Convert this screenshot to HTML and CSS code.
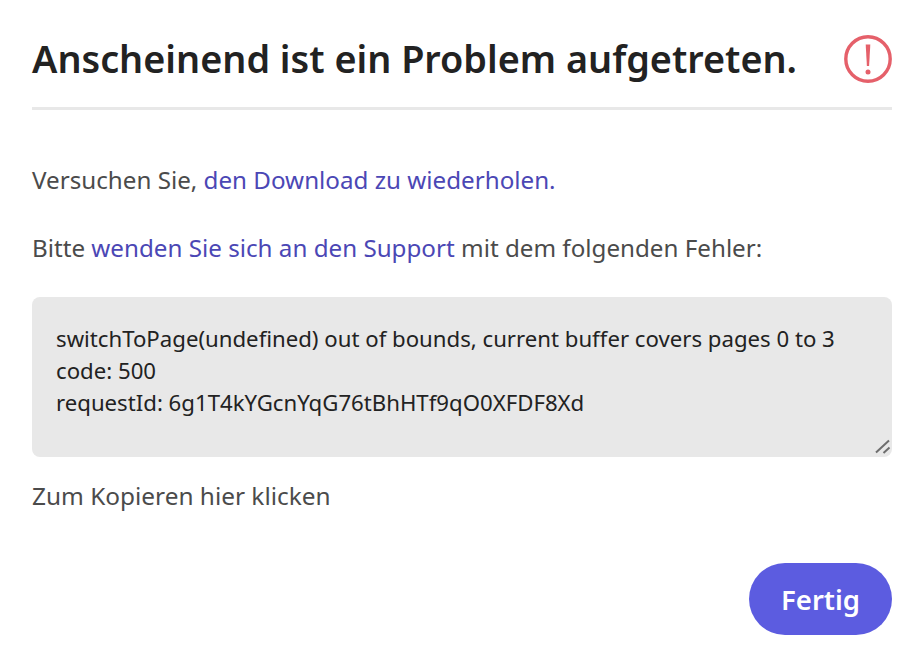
FILE: index.html
```html
<!DOCTYPE html>
<html lang="de">
<head>
  <meta charset="UTF-8">
  <meta name="viewport" content="width=device-width, initial-scale=1.0">
  <title>Fehler</title>
  <link rel="stylesheet" href="styles.css">
</head>
<body>
  <div class="dialog">
    <div class="header">
      <h1>Anscheinend ist ein Problem aufgetreten.</h1>
      <svg class="alert-icon" width="48" height="48" viewBox="0 0 48 48" aria-hidden="true">
        <circle cx="24" cy="24" r="22.2" fill="none" stroke="#e5606a" stroke-width="3.4"/>
        <path d="M21.700 9.500h4.600l-1.200 21.500h-2.200z" fill="#e5606a"/>
        <circle cx="24" cy="37" r="2.500" fill="#e5606a"/>
      </svg>
    </div>

    <p class="retry">Versuchen Sie, <a href="#">den Download zu wiederholen.</a></p>
    <p class="support">Bitte <a href="#">wenden Sie sich an den Support</a> mit dem folgenden Fehler:</p>

    <div class="error-box">
      <div>switchToPage(undefined) out of bounds, current buffer covers pages 0 to 3</div>
      <div>code: 500</div>
      <div>requestId: 6g1T4kYGcnYqG76tBhHTf9qO0XFDF8Xd</div>
      <svg class="grip" width="16" height="16" viewBox="0 0 16 16" aria-hidden="true">
        <path d="M1 13.500L14 1.500M8.500 14L14.500 8.500" stroke="#6e6e6e" stroke-width="2" fill="none"/>
      </svg>
    </div>

    <p class="copy-hint">Zum Kopieren hier klicken</p>

    <div class="actions">
      <button class="done">Fertig</button>
    </div>
  </div>
</body>
</html>
```

FILE: styles.css
```css
body {
  margin: 0;
  background: #fff;
  font-family: "Noto Sans", "Open Sans", sans-serif;
  color: #4b4b4b;
}
.dialog {
  padding: 35px 30px 0 32px;
}
.header {
  display: flex;
  align-items: center;
  justify-content: space-between;
  padding-bottom: 24px;
  border-bottom: 3px solid #e8e8e8;
}
.header h1 {
  margin: 0;
  font-size: 37.800px;
  line-height: 48px;
  font-weight: 600;
  color: #222;
}
.alert-icon {
  flex: none;
}
p {
  margin: 0;
  font-size: 24.200px;
  line-height: 32px;
}
a {
  color: #4b47b5;
  text-decoration: none;
}
.retry {
  margin-top: 54px;
}
.support {
  margin-top: 36px;
}
.error-box {
  position: relative;
  box-sizing: border-box;
  height: 160px;
  margin-top: 33px;
  padding: 26px 24px;
  background: #e8e8e8;
  border-radius: 8px;
  font-size: 22.200px;
  line-height: 32px;
  color: #222;
}
.grip {
  position: absolute;
  right: 1px;
  bottom: 2px;
}
.copy-hint {
  margin-top: 23px;
  font-size: 24.400px;
}
.actions {
  display: flex;
  justify-content: flex-end;
  margin-top: 51px;
}
.done {
  width: 143px;
  height: 72px;
  border: 0;
  border-radius: 36px;
  background: #5c5ce0;
  color: #fff;
  font-family: inherit;
  font-size: 27.500px;
  font-weight: 600;
}
```
